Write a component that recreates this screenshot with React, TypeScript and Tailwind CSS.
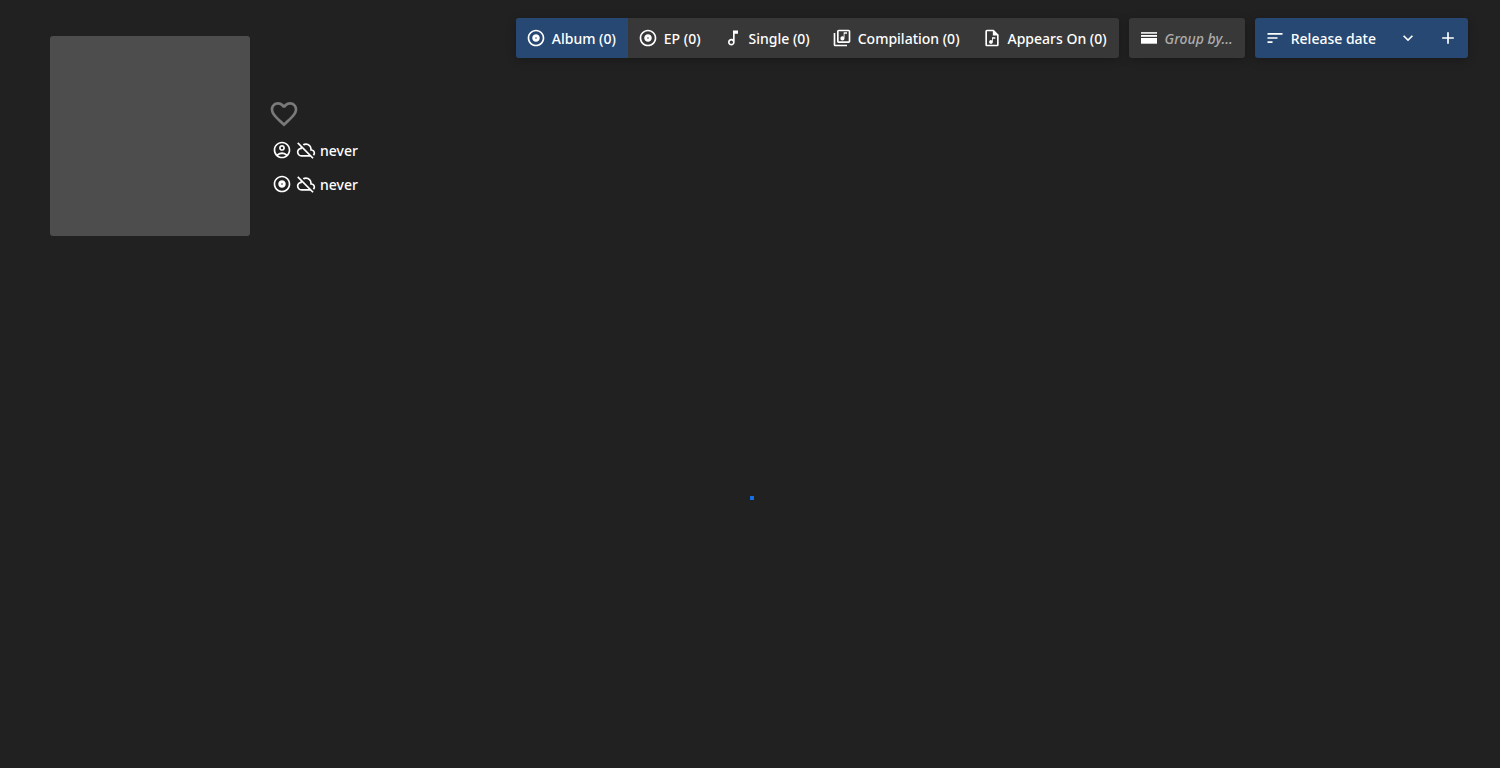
import type { ReactNode } from "react";
import {
  MdAdd,
  MdFavoriteBorder,
  MdKeyboardArrowDown,
  MdOutlineAccountCircle,
  MdOutlineAlbum,
  MdOutlineAudioFile,
  MdOutlineAudiotrack,
  MdOutlineLibraryMusic,
  MdSort,
} from "react-icons/md";

function IconBox({ children }: { children: ReactNode }) {
  return <span className="flex size-5 shrink-0 items-center justify-center">{children}</span>;
}

function Label({ children }: { children: ReactNode }) {
  return <span className="pt-0.5">{children}</span>;
}

function CloudOffIcon() {
  return (
    <svg width="20" height="20" viewBox="0 0 24 24" fill="currentColor" aria-hidden="true">
      <path d="M19.8 22.6L17.15 20H6.5Q4.2 20 2.6 18.4T1 14.5Q1 12.58 2.19 11.08 3.38 9.57 5.25 9.15 5.33 8.95 5.4 8.76 5.5 8.57 5.55 8.35L1.4 4.2L2.8 2.8L21.2 21.2M6.5 18H15.15L7.1 9.95Q7.05 10.23 7.03 10.5 7 10.73 7 11H6.5Q5.05 11 4.03 12.03 3 13.05 3 14.5 3 15.95 4.03 17 5.05 18 6.5 18M21.6 18.75L20.15 17.35Q20.6 17 20.8 16.54 21 16.08 21 15.5 21 14.45 20.27 13.73 19.55 13 18.5 13H17V11Q17 8.93 15.54 7.46 14.08 6 12 6 11.33 6 10.7 6.16 10.07 6.33 9.5 6.68L8.05 5.23Q8.93 4.63 9.91 4.31 10.9 4 12 4 14.93 4 16.96 6.04 19 8.07 19 11 20.73 11.2 21.86 12.5 23 13.78 23 15.5 23 16.5 22.63 17.31 22.25 18.15 21.6 18.75Z" />
    </svg>
  );
}

function GroupIcon() {
  return (
    <svg width="16" height="12" viewBox="0 0 16 12" fill="currentColor" aria-hidden="true">
      <rect width="16" height="1.8" opacity="0.85" />
      <rect y="3" width="16" height="1.8" />
      <rect y="6" width="16" height="5.7" />
    </svg>
  );
}

const types = [
  { label: "Album (0)", icon: <MdOutlineAlbum size={20} />, active: true },
  { label: "EP (0)", icon: <MdOutlineAlbum size={20} />, active: false },
  { label: "Single (0)", icon: <MdOutlineAudiotrack size={20} />, active: false },
  { label: "Compilation (0)", icon: <MdOutlineLibraryMusic size={20} />, active: false },
  { label: "Appears On (0)", icon: <MdOutlineAudioFile size={20} />, active: false },
];

function Updated({ icon, label }: { icon: ReactNode; label: string }) {
  return (
    <button type="button" aria-label={label} className="flex h-[34px] items-center gap-1 px-0.5">
      <IconBox>{icon}</IconBox>
      <IconBox>
        <CloudOffIcon />
      </IconBox>
      <Label>never</Label>
    </button>
  );
}

export default function App() {
  return (
    <main className="min-h-screen bg-[#212121] pr-8 pl-[50px] pt-[18px] font-['Noto_Sans',sans-serif] text-sm font-medium text-white">
      <div className="flex items-start">
        <section className="flex gap-5 pt-[18px]">
          <div className="size-[200px] shrink-0 rounded-[3px] bg-[#4d4d4d]" />
          <div className="flex flex-col items-start pt-[62px]">
            <button type="button" aria-label="Favorite" className="-ml-0.5 flex size-8 items-center justify-center text-[#7a7a7a]">
              <MdFavoriteBorder size={32} />
            </button>
            <div className="mt-[3px] flex flex-col">
              <Updated label="Artist updated: never" icon={<MdOutlineAccountCircle size={20} />} />
              <Updated label="Albums updated: never" icon={<MdOutlineAlbum size={20} />} />
            </div>
          </div>
        </section>
        <nav className="ml-auto flex gap-2.5 whitespace-nowrap">
          <div className="flex h-10 overflow-hidden rounded-[3px] bg-[#383838] shadow-[0_2px_10px_rgba(0,0,0,0.25)]">
            {types.map((t) => (
              <button
                key={t.label}
                type="button"
                aria-pressed={t.active}
                className={`flex items-center gap-1.5 pr-3 pl-2.5 ${t.active ? "bg-[#274872]" : ""}`}
              >
                <IconBox>{t.icon}</IconBox>
                <Label>{t.label}</Label>
              </button>
            ))}
          </div>
          <button type="button" className="flex h-10 items-center gap-1.5 rounded-[3px] bg-[#383838] pr-3 pl-2.5 shadow-[0_2px_10px_rgba(0,0,0,0.25)]">
            <IconBox>
              <GroupIcon />
            </IconBox>
            <span className="pt-0.5 italic text-[#acacac]">Group by...</span>
          </button>
          <div className="flex h-10 rounded-[3px] bg-[#274872] shadow-[0_2px_10px_rgba(0,0,0,0.25)]">
            <button type="button" className="flex items-center gap-1.5 pr-3 pl-2.5">
              <IconBox>
                <MdSort size={20} />
              </IconBox>
              <Label>Release date</Label>
            </button>
            <button type="button" aria-label="Change direction" className="flex w-10 items-center justify-center">
              <MdKeyboardArrowDown size={20} />
            </button>
            <button type="button" aria-label="Add sorting" className="flex w-10 items-center justify-center">
              <MdAdd size={20} />
            </button>
          </div>
        </nav>
      </div>
      <div role="status" aria-label="Loading" className="flex justify-center pt-[260px]">
        <span className="-ml-3.5 size-1 bg-[#146fe6]" />
      </div>
    </main>
  );
}
